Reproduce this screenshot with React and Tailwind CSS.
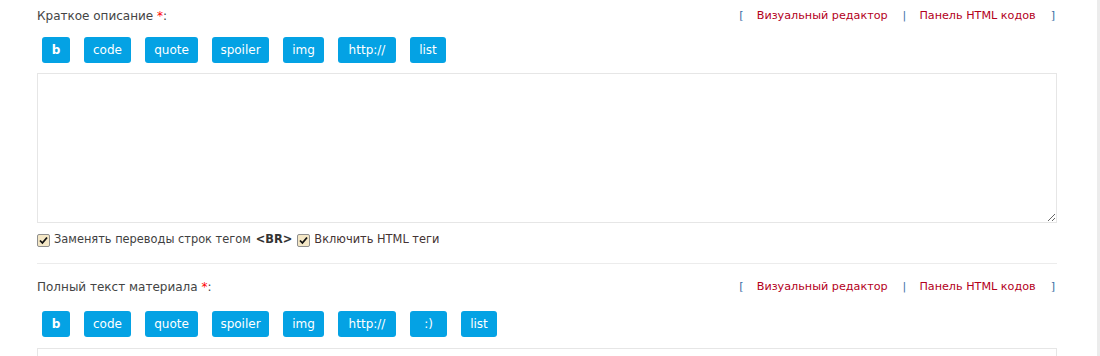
import React from "react";

const font = { fontFamily: '"DejaVu Sans", Verdana, sans-serif' };

function Btn({ w, children, bold }) {
  return (
    <button
      type="button"
      className={`h-[26px] rounded-[3px] bg-[#04a2e4] text-white text-[12px] leading-none flex items-center justify-center ${bold ? "font-bold" : ""} ${w}`}
    >
      {children}
    </button>
  );
}

function Check() {
  return (
    <span className="inline-flex w-[13px] h-[13px] rounded-[2px] border border-[#8f8f8f] bg-[#f4e7c6] items-center justify-center shrink-0">
      <svg width="9" height="9" viewBox="0 0 9 9">
        <path d="M1 4.5 L3.4 7 L8 1.5" fill="none" stroke="#111" strokeWidth="1.8" />
      </svg>
    </span>
  );
}

function Header({ label }) {
  return (
    <div className="flex items-center justify-between h-[16px] text-[#444]">
      <div className="text-[12px]">
        {label} <span className="text-[#ff0000]">*</span>:
      </div>
      <div className="flex items-center pr-[2px] text-[11.2px]">
        <span className="text-[#3d6fa6]">[</span>
        <span className="ml-[13px] text-[#b3001b]">Визуальный редактор</span>
        <span className="ml-[15px] text-[#3d6fa6]">|</span>
        <span className="ml-[13px] text-[#b3001b]">Панель HTML кодов</span>
        <span className="ml-[15px] text-[#3d6fa6]">]</span>
      </div>
    </div>
  );
}

export default function App() {
  return (
    <div className="w-[1100px] h-[356px] bg-white flex overflow-hidden" style={font}>
      <div className="w-[1097px] pl-[37px] pt-[8px]">
        <div className="w-[1020px]">
          <Header label="Краткое описание" />
          <div className="mt-[13px] ml-[5px] flex gap-[14px]">
            <Btn w="w-[28px]" bold>b</Btn>
            <Btn w="w-[47px]">code</Btn>
            <Btn w="w-[53px]">quote</Btn>
            <Btn w="w-[57px]">spoiler</Btn>
            <Btn w="w-[41px]">img</Btn>
            <Btn w="w-[58px]">http://</Btn>
            <Btn w="w-[36px]">list</Btn>
          </div>
          <textarea className="block mt-[10px] w-[1020px] h-[150px] border border-[#e6e6e6] bg-white outline-none resize" />
          <div className="mt-[9px] flex items-center h-[16px] text-[11.4px] text-[#3f3f3f]">
            <Check />
            <span className="ml-[4px]">Заменять переводы строк тегом</span>
            <b className="ml-[5px] text-[#333]">&lt;BR&gt;</b>
            <span className="ml-[5px] flex"><Check /></span>
            <span className="ml-[4px] text-[#443333]">Включить HTML теги</span>
          </div>
          <div className="mt-[15px] h-px bg-[#ececec]" />
          <div className="mt-[15px]">
            <Header label="Полный текст материала" />
          </div>
          <div className="mt-[16px] ml-[5px] flex gap-[14px]">
            <Btn w="w-[28px]" bold>b</Btn>
            <Btn w="w-[47px]">code</Btn>
            <Btn w="w-[53px]">quote</Btn>
            <Btn w="w-[57px]">spoiler</Btn>
            <Btn w="w-[41px]">img</Btn>
            <Btn w="w-[58px]">http://</Btn>
            <Btn w="w-[37px]">:)</Btn>
            <Btn w="w-[36px]">list</Btn>
          </div>
          <textarea className="block mt-[11px] w-[1020px] h-[150px] border border-[#e6e6e6] bg-white outline-none resize" />
        </div>
      </div>
      <div className="w-[3px] h-full bg-[#ececec]" />
    </div>
  );
}
